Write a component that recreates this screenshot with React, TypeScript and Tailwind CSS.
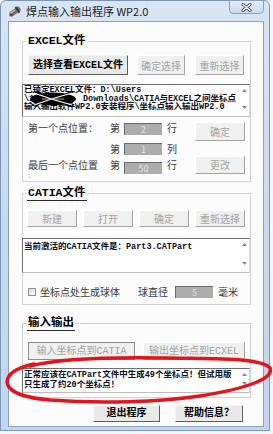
import type { ReactNode } from 'react';

const mono = "font-['Liberation_Mono','Noto_Sans_CJK_SC',monospace]";

function TitleIcon() {
    return (
        <svg width="14" height="13" viewBox="0 0 14 13">
            <g transform="rotate(-35 7 6.5)">
                <rect x="1" y="4" width="12" height="5" rx="1.5" fill="#707070" />
                <rect x="2" y="4.5" width="6" height="1.6" fill="#b9b9b9" />
                <rect x="9" y="3" width="2" height="7" fill="#3a3a3a" />
            </g>
            <circle cx="3" cy="10" r="1.6" fill="#4a4a4a" />
        </svg>
    );
}

function CloseGlyph() {
    return (
        <svg width="11" height="9" viewBox="0 0 11 9">
            <path d="M2 1.5 L9 7.5 M9 1.5 L2 7.5" stroke="#44546b" strokeWidth="3" strokeLinecap="round" />
            <path d="M2 1.5 L9 7.5 M9 1.5 L2 7.5" stroke="#ffffff" strokeWidth="1.3" strokeLinecap="round" />
        </svg>
    );
}

function Arrow({ down }: { down?: boolean }) {
    return (
        <svg width="5" height="3" viewBox="0 0 5 3">
            <path d={down ? 'M0 0 L5 0 L2.5 3 Z' : 'M0 3 L5 3 L2.5 0 Z'} fill="#8a8a8a" />
        </svg>
    );
}

function TextBox({ size, children }: { size: string; children: ReactNode }) {
    return (
        <div className={`relative -ml-[6px] w-[228px] ${size} flex bg-white border border-t-[#6f6f6f] border-l-[#6f6f6f] border-r-[#d6d6d6] border-b-[#bdbdbd]`}>
            <div className={`flex-1 pl-[1px] pt-[1px] overflow-hidden whitespace-nowrap text-[8.5px] leading-[8.6px] font-bold text-[#0b0b1e] ${mono}`}>
                {children}
            </div>
            <div className="w-[10px] flex flex-col items-center justify-between pt-[4px] pb-[7px]">
                <Arrow />
                <Arrow down />
            </div>
        </div>
    );
}

function Btn({ size, children, on, framed }: { size: string; children: ReactNode; on?: boolean; framed?: boolean }) {
    const edge = framed
        ? 'border border-[#8c8c8c]'
        : on
            ? 'border border-t-[#f7f7f7] border-l-[#f7f7f7] border-r-[#5f5f5f] border-b-[#5f5f5f]'
            : 'border border-t-[#ffffff] border-l-[#ffffff] border-r-[#a3a3a3] border-b-[#a3a3a3]';
    return (
        <div className={`${size} ${edge} flex items-center justify-center text-[10px] ${on ? `bg-[#e9e9e9] text-black font-bold ${mono}` : 'bg-[#f0f0f0] text-[#a4a4a4]'}`}>
            {children}
        </div>
    );
}

function NumBox({ children }: { children: ReactNode }) {
    return (
        <div className="w-[38px] h-[12px] bg-[#adadad] border-t border-l border-[#6a6a6a] flex items-center justify-center text-[9px] leading-none text-[#e4e4e4]">
            {children}
        </div>
    );
}

function Group({ title, mark, className, children }: { title: string; mark?: boolean; className: string; children: ReactNode }) {
    return (
        <div className={`relative border border-[#d2d2d2] pl-[5px] flex flex-col ${className}`}>
            <span className={`absolute -top-[8px] left-[4px] px-[1px] bg-[#fcfcfc] text-[11.5px] leading-[14px] font-bold text-black ${mono} ${mark ? 'border-b border-[#2a2a2a]' : ''}`}>
                {title}
            </span>
            {children}
        </div>
    );
}

export default function App() {
    return (
        <div className="relative w-[273px] h-[434px] bg-[#f4f6f9] overflow-hidden font-['Noto_Sans_CJK_SC',sans-serif]">
            <div className="w-[270px] h-[431px] flex flex-col rounded-t-[6px] border border-[#7d96b6] bg-gradient-to-b from-[#d8e5f5] via-[#c8daf0] to-[#c3d6ef]">
                {/* title bar */}
                <div className="h-[20px] flex shrink-0">
                    <div className="flex items-center h-[20px] pl-[7px] gap-[4px]">
                        <TitleIcon />
                        <span className="text-[11px] leading-none text-[#1c1c1c]">焊点输入输出程序 WP2.0</span>
                    </div>
                    <div className="ml-auto mr-[5px] -mt-[1px] w-[35px] h-[14px] rounded-b-[4px] border border-[#8aa1c0] bg-gradient-to-b from-[#e6eef8] to-[#c9d9ee] flex items-center justify-center">
                        <CloseGlyph />
                    </div>
                </div>

                {/* client */}
                <div className="flex-1 ml-[7px] mr-[5px] mb-[3px] border border-[#8ba1bf] bg-[#fcfcfc] pl-[13px] pr-[12px] flex flex-col">
                    <Group title="EXCEL文件" className="mt-[19px] pb-[5px]">
                        <div className="mt-[13px] h-[20px] flex gap-[9px]">
                            <Btn size="w-[100px] h-[20px]" on>选择查看EXCEL文件</Btn>
                            <Btn size="w-[48px] h-[20px]">确定选择</Btn>
                            <Btn size="w-[49px] h-[20px] ml-[1px]">重新选择</Btn>
                        </div>
                        <div className="mt-[9px]">
                            <TextBox size="h-[33px]">
                                <div>已锁定EXCEL文件：D:\Users</div>
                                <div className="flex">
                                    <span className="w-[59px]">\1</span>
                                    <span>Downloads\CATIA与EXCEL之间坐标点</span>
                                </div>
                                <div>输入输出软件WP2.0安装程序\坐标点输入输出WP2.0</div>
                                <svg className="absolute left-[5px] top-[5px]" width="50" height="18" viewBox="0 0 50 18">
                                    <ellipse cx="25" cy="9" rx="23" ry="6.5" fill="#050505" />
                                    <path d="M3 2 L20 7 L10 1 Z M47 16 L30 11 L41 17 Z M2 15 L18 10 L8 17 Z M47 2 L32 7 L42 1 Z" fill="#050505" />
                                    <path d="M6 3 Q25 10 44 15 M6 15 Q25 8 44 3" stroke="#ffffff" strokeWidth="1.2" fill="none" />
                                    <path d="M14 9 L36 9" stroke="#d0d0d0" strokeWidth="0.8" />
                                </svg>
                            </TextBox>
                        </div>

                        <div className="mt-[5px] h-[20px] flex items-start text-[10px] leading-[12px] text-[#3a3a3a]">
                            <span className="w-[82px]">第一个点位置：</span>
                            <span className="w-[14px]">第</span>
                            <div className="mt-[1px]"><NumBox>2</NumBox></div>
                            <span className="w-[33px] pl-[5px]">行</span>
                            <Btn size="w-[50px] h-[19px]">确定</Btn>
                        </div>
                        <div className="mt-[1px] h-[12px] flex items-start text-[10px] leading-[12px] text-[#3a3a3a]">
                            <span className="w-[82px]" />
                            <span className="w-[14px]">第</span>
                            <NumBox>1</NumBox>
                            <span className="w-[33px] pl-[5px]">列</span>
                        </div>
                        <div className="mt-[1px] h-[20px] flex items-start text-[10px] leading-[12px] text-[#3a3a3a]">
                            <div className="w-[82px] mt-[3px] flex flex-col">
                                <span>最后一个点位置</span>
                                <span className="mt-[1px] text-[5px] leading-[5px]">：</span>
                            </div>
                            <span className="w-[14px] mt-[3px]">第</span>
                            <div className="mt-[6px]"><NumBox>50</NumBox></div>
                            <span className="w-[33px] pl-[5px] mt-[3px]">行</span>
                            <Btn size="w-[50px] h-[18px]">更改</Btn>
                        </div>
                    </Group>

                    <Group title="CATIA文件" mark className="mt-[11px] pb-[6px]">
                        <div className="mt-[16px] h-[17px] -ml-[1px] flex gap-[6px]">
                            <Btn size="w-[50px] h-[17px]">新建</Btn>
                            <Btn size="w-[50px] h-[17px]">打开</Btn>
                            <Btn size="w-[50px] h-[17px]">确定</Btn>
                            <Btn size="w-[50px] h-[17px]">重新选择</Btn>
                        </div>
                        <div className="mt-[11px]">
                            <TextBox size="h-[35px]">
                                <div className="pt-[3px]">当前激活的CATIA文件是：Part3.CATPart</div>
                            </TextBox>
                        </div>
                        <div className="mt-[13px] h-[12px] flex items-center text-[10px] leading-[12px] text-[#3a3a3a]">
                            <div className="w-[8px] h-[8px] border border-[#8e8f8f] bg-gradient-to-br from-[#dcdcdc] to-[#fbfbfb]" />
                            <span className="w-[102px] pl-[4px]">坐标点处生成球体</span>
                            <span className="w-[37px]">球直径</span>
                            <NumBox>5</NumBox>
                            <span className="pl-[5px]">毫米</span>
                        </div>
                    </Group>

                    <Group title="输入输出" mark className="mt-[18px] pb-[4px]">
                        <div className="mt-[18px] h-[18px] flex gap-[8px]">
                            <Btn size={`w-[107px] h-[18px] ${mono}`} framed>输入坐标点到CATIA</Btn>
                            <Btn size={`w-[102px] h-[18px] ${mono}`}>输出坐标点到ECXEL</Btn>
                        </div>
                        <div className="mt-[8px]">
                            <TextBox size="h-[25px]">
                                <div className="pt-[1px]">正常应该在CATPart文件中生成49个坐标点！但试用版</div>
                                <div className="pt-[1px]">只生成了约20个坐标点！</div>
                            </TextBox>
                        </div>
                    </Group>

                    <div className="mt-[7px] ml-[71px] flex gap-[15px]">
                        <Btn size="w-[67px] h-[17px]" on>退出程序</Btn>
                        <Btn size="w-[68px] h-[17px]" on>帮助信息？</Btn>
                    </div>
                </div>
            </div>

            {/* red hand-drawn mark */}
            <svg className="absolute left-0 top-0 pointer-events-none" width="273" height="434" viewBox="0 0 273 434">
                <path
                    d="M30 366 C60 358, 120 357, 170 358 C220 359, 262 358, 270 368 C274 378, 250 388, 200 396 C160 402, 100 404, 50 400 C15 397, 4 388, 8 378 C11 371, 20 367, 34 364"
                    stroke="#e3141b"
                    strokeWidth="3.5"
                    fill="none"
                    strokeLinecap="round"
                />
            </svg>
        </div>
    );
}
